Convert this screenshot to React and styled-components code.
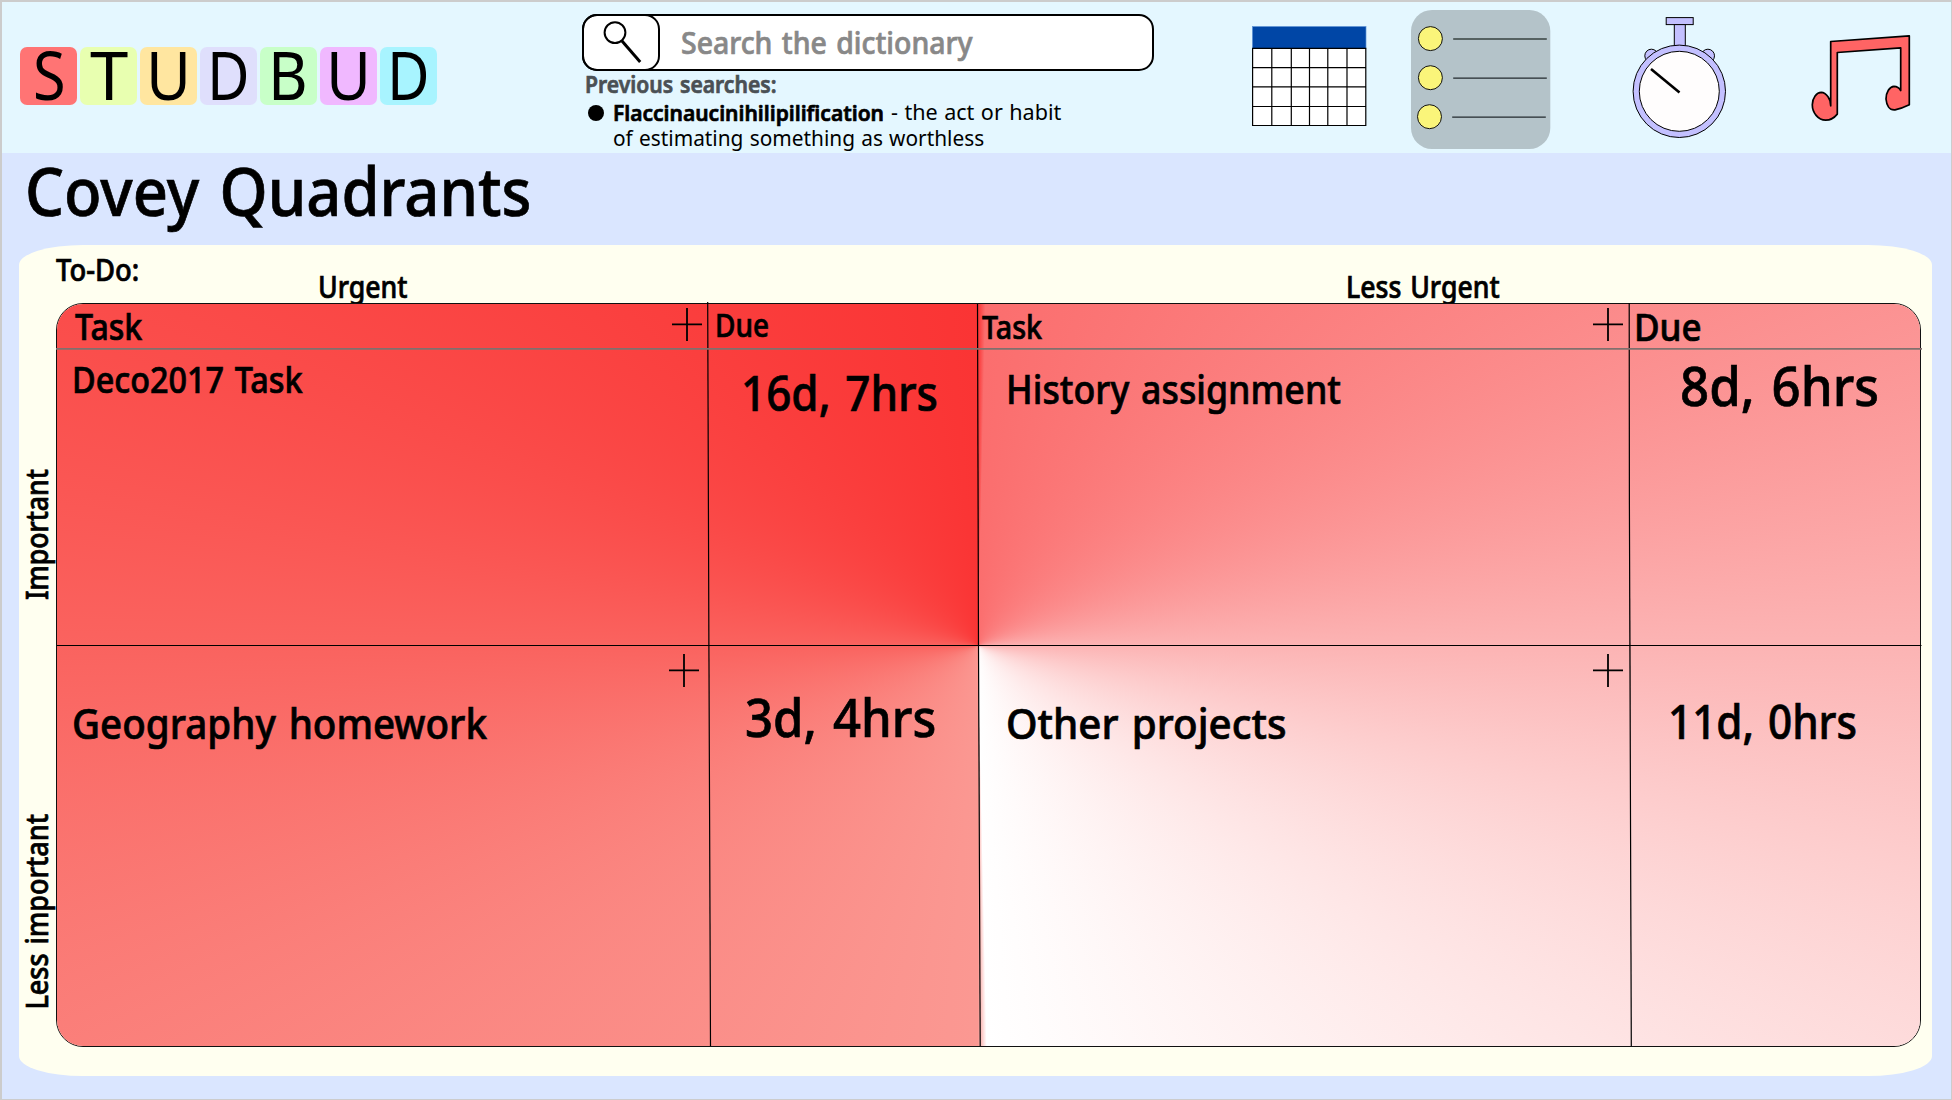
import React, { useLayoutEffect, useRef, useState } from 'react';
import styled, { createGlobalStyle } from 'styled-components';

const GlobalStyle = createGlobalStyle`
  *, *::before, *::after { box-sizing: border-box; }
  body { margin: 0; font-family: "Noto Sans", "Open Sans", sans-serif; color: #000; }
`;

const Page = styled.div`
  display: flex;
  flex-direction: column;
  width: 1952px;
  height: 1100px;
  overflow: hidden;
  background: #dae6ff;
  border: solid #ccc;
  border-width: 2px 1px 1px 2px;
`;

const Header = styled.header`
  display: flex;
  align-items: flex-start;
  flex: none;
  height: 151px;
  background: #e4f7ff;
`;

const Logo = styled.div`
  display: flex;
  gap: 2.4px;
  margin: 45px 0 0 17.6px;
  width: 562px;
`;

const Tile = styled.div`
  width: 57.6px;
  height: 58px;
  padding-left: ${(p) => p.$pad}px;
  border-radius: 7px;
  background: ${(p) => p.$bg};
`;

const TextBox = styled.div`
  flex: none;
  width: ${(p) => (p.$vertical ? p.$size : p.$width)}px;
  height: ${(p) => (p.$vertical ? p.$width : p.$size)}px;
  margin: ${(p) => p.$top || 0}px 0 0 ${(p) => p.$left || 0}px;
  font-size: ${(p) => p.$size}px;
  font-weight: ${(p) => p.$weight || 500};
  line-height: 1;
  word-spacing: ${(p) => (p.$weight === 400 ? 0.04 : 0.07)}em;
  color: ${(p) => p.$color || '#000'};
  -webkit-text-stroke: ${(p) => (p.$weight === 400 ? 0 : 0.7)}px currentColor;
  ${(p) => p.$vertical && 'transform: rotate(180deg); writing-mode: vertical-rl;'}
`;

const Glyphs = styled.span`
  display: inline-block;
  white-space: nowrap;
  line-height: 1;
  vertical-align: top;
  transform-origin: 0 0;
`;

function Label({ width, size, weight, color, top, left, vertical, children }) {
  const ref = useRef(null);
  const [ratio, setRatio] = useState(1);
  useLayoutEffect(() => {
    const el = getComputedStyle(ref.current);
    setRatio(width / parseFloat(vertical ? el.height : el.width));
  }, [width, vertical]);
  return (
    <TextBox $width={width} $size={size} $weight={weight} $color={color} $top={top} $left={left} $vertical={vertical}>
      <Glyphs ref={ref} style={{ transform: vertical ? `scaleY(${ratio})` : `scaleX(${ratio})` }}>{children}</Glyphs>
    </TextBox>
  );
}

const Lookup = styled.section`
  display: flex;
  flex-direction: column;
  width: 573px;
  margin-top: 12.3px;
`;

const SearchBar = styled.div`
  display: flex;
  width: 572px;
  height: 57px;
  background: #fff;
  border: 2px solid #000;
  border-radius: 15px;
`;

const SearchButton = styled.div`
  width: 78.5px;
  height: 57px;
  margin: -2px 0 0 -2px;
  border: 2px solid #000;
  border-radius: 15px;
`;

const Line = styled.div`
  display: flex;
  align-items: flex-start;
`;

const Bullet = styled.span`
  width: 16px;
  height: 16px;
  margin: 9px 0 0 6px;
  border-radius: 50%;
  background: #000;
`;

const Tools = styled.nav`
  display: flex;
  align-items: flex-start;
`;

const ToolIcon = styled.svg`
  display: block;
  flex: none;
  overflow: visible;
  margin: ${(p) => p.$top}px 0 0 ${(p) => p.$left}px;
`;

const TitleRow = styled.div`
  display: flex;
  flex: none;
  height: 92px;
`;

const Panel = styled.main`
  display: flex;
  flex-direction: column;
  width: 1912.5px;
  height: 830.5px;
  margin-left: 17px;
  background: #fffff0;
  border-radius: 64px / 20px;
`;

const AxisRow = styled.div`
  display: flex;
  flex: none;
  height: 58px;
`;

const PanelBody = styled.div`
  display: flex;
`;

const AxisColumn = styled.div`
  display: flex;
  flex-direction: column;
  width: 37px;
  height: 744px;
`;

const Board = styled.div`
  position: relative;
  display: grid;
  grid-template-columns: 651px 270px 651px 291px;
  grid-template-rows: 45px 297px 400px;
  width: 1865px;
  height: 744px;
  border: 1px solid #111;
  border-radius: 27px;
`;

const Heat = styled.div`
  position: absolute;
  inset: 0;
  overflow: hidden;
  border-radius: 26px;
  &::before {
    content: "";
    position: absolute;
    left: -279px;
    top: -858.5px;
    width: 2400px;
    height: 2400px;
    transform: scaleY(0.4);
    background: conic-gradient(#fa3434 0deg, #fb6e6e 0.5deg, #fcb4b4 90deg, #fff 179.5deg, #fb9892 180deg, #fa635f 270deg, #fa3434 360deg);
  }
`;

const Rules = styled.svg`
  position: absolute;
  left: 0;
  top: 0;
  overflow: visible;
`;

const Cell = styled.div`
  position: relative;
  display: flex;
  align-items: flex-start;
  min-width: 0;
`;

const AddButton = styled.svg`
  flex: none;
  margin: ${(p) => p.$top}px ${(p) => p.$right}px 0 auto;
`;

function Plus({ top, right = 6 }) {
  return (
    <AddButton $top={top} $right={right} width="30" height="33" viewBox="0 0 30 33" stroke="#000" strokeWidth="1.8">
      <path d="M0 16.4H30M15 0V33" />
    </AddButton>
  );
}

const letters = [
  ['S', '#ff7474', 13, 32.6],
  ['T', '#e8ffb0', 10, 38.3],
  ['U', '#ffe6a0', 6.5, 45],
  ['D', '#dfdffc', 7.8, 42.6],
  ['B', '#c8ffc8', 8.5, 39.7],
  ['U', '#f0b8ff', 6.5, 45],
  ['D', '#a8f4ff', 7.8, 42.6],
];

const calCols = [0.6, 19.8, 39.3, 57.5, 75.8, 95, 113.8];
const calRows = [22.3, 41.6, 60.8, 80.5, 99.5];

export default function App() {
  return (
    <Page>
      <GlobalStyle />
      <Header>
        <Logo>
          {letters.map(([ch, bg, pad, w], i) => (
            <Tile key={i} $bg={bg} $pad={pad}>
              <Label width={w} size={67} weight={400} top={-6.5}>{ch}</Label>
            </Tile>
          ))}
        </Logo>
        <Lookup>
          <SearchBar>
            <SearchButton>
              <svg width="75" height="53" viewBox="0 0 75 53" fill="none" stroke="#000">
                <circle cx="31" cy="16.6" r="10.4" strokeWidth="2" />
                <path d="M38 25L56.2 46" strokeWidth="3" />
              </svg>
            </SearchButton>
            <Label width={291.5} size={30} color="#888" top={12} left={20.5}>Search the dictionary</Label>
          </SearchBar>
          <Label width={191.5} size={23} weight={600} color="#4a5054" top={2.2} left={3}>Previous searches:</Label>
          <Line>
            <Bullet />
            <Label width={271} size={22} weight={600} top={4.2} left={9.5}>Flaccinaucinihilipilification</Label>
            <Label width={170.3} size={22} weight={400} top={3.4} left={6.8}>- the act or habit</Label>
          </Line>
          <Label width={371.2} size={22} weight={400} top={3.4} left={31.2}>of estimating something as worthless</Label>
        </Lookup>
        <Tools>
          <ToolIcon $top={24} $left={97.1} width="114.4" height="100" viewBox="0 0 114.4 100">
            <rect x="0.5" y="0.5" width="113.4" height="99" fill="#fff" />
            <rect x="0.4" y="0.5" width="113.6" height="22" fill="#0046a6" stroke="#5d93d6" strokeWidth="0.7" />
            <path d={calCols.map((x) => `M${x} 22V100`).join('') + calRows.map((y) => `M0 ${y}H114.4`).join('')} stroke="#000" strokeWidth="1.2" />
          </ToolIcon>
          <ToolIcon $top={8} $left={45} width="139.3" height="139" viewBox="0 0 139.3 139">
            <rect width="139.3" height="139" rx="21" fill="#b4c3c9" />
            <g fill="#faf57a" stroke="#111" strokeWidth="1">
              <circle cx="19.4" cy="28.6" r="12" />
              <circle cx="19.4" cy="67.7" r="12" />
              <circle cx="18.5" cy="106.7" r="12" />
            </g>
            <path d="M42.2 29H135.8" stroke="#566262" strokeWidth="1.8" />
            <path d="M42.2 68.1H135.8M41.2 107.2H134.8" stroke="#222a2e" strokeWidth="1.3" />
          </ToolIcon>
          <ToolIcon $top={15} $left={82.3} width="94" height="121" viewBox="0 0 94 121" fill="#c3c0ff" stroke="#000" strokeWidth="1">
            <circle cx="18.4" cy="38.8" r="6.6" />
            <circle cx="74.9" cy="38.8" r="6.6" />
            <rect x="41.3" y="7.5" width="11" height="22" />
            <rect x="33.2" y="0.6" width="27" height="7" />
            <circle cx="46.3" cy="74.3" r="46.2" />
            <circle cx="46.3" cy="74.3" r="40" fill="#fffdfd" />
            <path d="M18 51.9L46.5 75.5" strokeWidth="2.6" />
          </ToolIcon>
          <ToolIcon $top={33} $left={85.3} width="98" height="87" viewBox="232 34.5 98 87" fill="#ff6464" stroke="#000" strokeWidth="1.7" strokeLinejoin="round">
            <path d="M250.7 41L329.3 35.4V104.3C324 107 319 108.5 315 109.3C309 109.8 306.5 104 306 98.5C306 92 309.5 86 314 85.8C317 85.8 319.3 87.5 320.7 90V47.3L257.3 52V113.6C254.5 117 250.5 119.7 245.7 119.7C238 119.7 232.3 112 232.3 104.3C232.5 97 236.5 92 241.3 91.9C246 92 251.3 99 250.7 105.3Z" />
          </ToolIcon>
        </Tools>
      </Header>
      <TitleRow>
        <Label width={506.5} size={67} top={4} left={22.5}>Covey Quadrants</Label>
      </TitleRow>
      <Panel>
        <AxisRow>
          <Label width={83.2} size={30} top={9.7} left={37}>To-Do:</Label>
          <Label width={89.6} size={30} top={27} left={179}>Urgent</Label>
          <Label width={153.6} size={30} top={27} left={938}>Less Urgent</Label>
        </AxisRow>
        <PanelBody>
          <AxisColumn>
            <Label vertical width={131} size={30} top={166} left={3}>Important</Label>
            <Label vertical width={195.6} size={30} top={214} left={3}>Less important</Label>
          </AxisColumn>
          <Board>
            <Heat />
            <Rules width="1863" height="742" stroke="#000" strokeWidth="1.2">
              <path d="M650.7 -2L651.9 340L653.5 742" />
              <path d="M920.5 0L921.5 341L923.2 742" />
              <path d="M1572.2 -1L1572.4 200L1574.3 742" />
              <path d="M-1 44.9H1865" stroke="#80706e" strokeWidth="1.6" />
              <path d="M0 341.5H1864.5" strokeWidth="1" />
            </Rules>
            <Cell><Label width={67.3} size={36} top={5} left={18.3}>Task</Label><Plus top={4} /></Cell>
            <Cell><Label width={54} size={32} top={5} left={6.5}>Due</Label></Cell>
            <Cell><Label width={60} size={32} top={7} left={3.7}>Task</Label><Plus top={4} /></Cell>
            <Cell><Label width={67.7} size={38.5} top={3} left={5}>Due</Label></Cell>

            <Cell><Label width={230.7} size={36} top={13.3} left={15}>Deco2017 Task</Label></Cell>
            <Cell><Label width={197} size={49} top={18.8} left={33}>16d, 7hrs</Label></Cell>
            <Cell><Label width={335} size={40} top={20.2} left={28}>History assignment</Label></Cell>
            <Cell><Label width={199} size={55} top={8} left={50.8}>8d, 6hrs</Label></Cell>

            <Cell><Label width={415} size={42} top={56} left={15.2}>Geography homework</Label><Plus top={8} right={9} /></Cell>
            <Cell><Label width={191.2} size={53} top={44} left={36.6}>3d, 4hrs</Label></Cell>
            <Cell><Label width={280.6} size={42} top={56} left={28}>Other projects</Label><Plus top={8} /></Cell>
            <Cell><Label width={189} size={47} top={52} left={39.3}>11d, 0hrs</Label></Cell>
          </Board>
        </PanelBody>
      </Panel>
    </Page>
  );
}
